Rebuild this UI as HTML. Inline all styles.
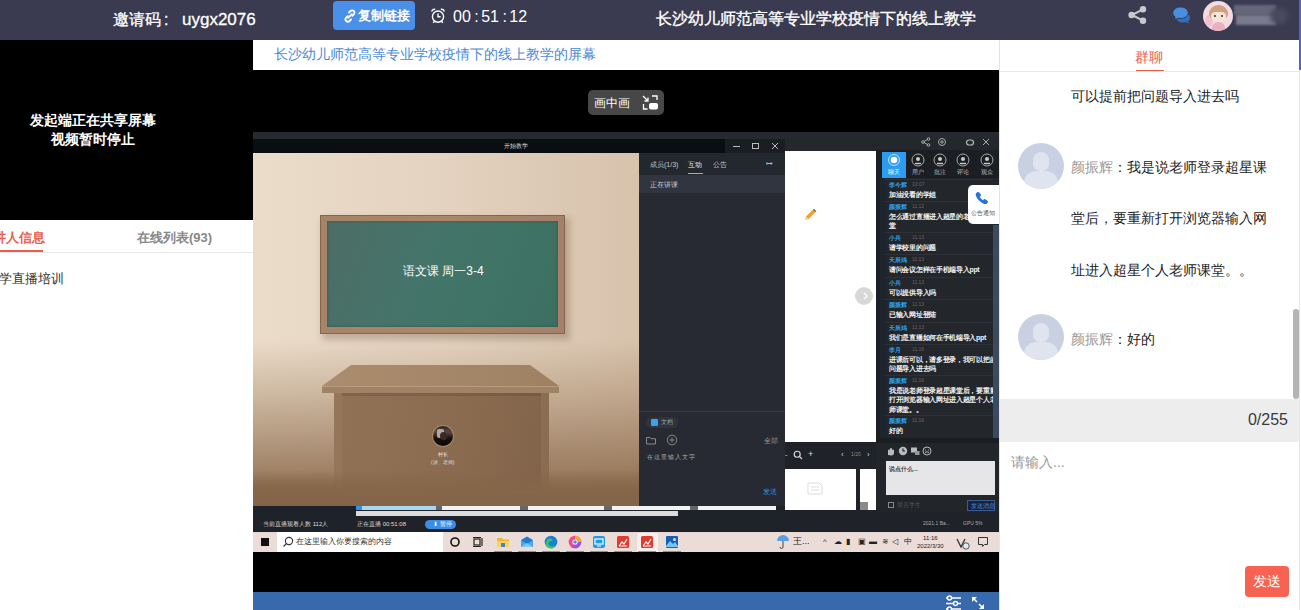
<!DOCTYPE html>
<html><head><meta charset="utf-8">
<style>
*{margin:0;padding:0;box-sizing:border-box}
html,body{width:1301px;height:610px;overflow:hidden;background:#fff;font-family:"Liberation Sans",sans-serif}
.abs{position:absolute}
#top{position:absolute;left:0;top:0;width:1301px;height:40px;background:#3a3b50}
#top .invite{position:absolute;left:113px;top:9px;color:#fff;font-size:16px;-webkit-text-stroke:0.3px #fff;line-height:22px;white-space:nowrap}
#copy{position:absolute;left:333px;top:1px;width:82px;height:29px;background:#4a90e8;border-radius:4px;color:#fff;font-size:13px;line-height:29px}
#timer{position:absolute;left:453px;top:7px;color:#fff;font-size:16px;line-height:20px;white-space:nowrap}
#title{position:absolute;left:656px;top:8px;color:#fff;font-size:16px;-webkit-text-stroke:0.35px #fff;line-height:22px;white-space:nowrap}
#left{position:absolute;left:0;top:40px;width:253px;height:570px;background:#fff}
#lvid{position:absolute;left:0;top:0;width:253px;height:180px;background:#000;color:#fff;font-size:13px;text-align:center}
#center{position:absolute;left:253px;top:40px;width:746px;height:570px;background:#000}
#right{position:absolute;left:999px;top:40px;width:302px;height:570px;background:#fff;border-left:1px solid #e4e4e4}
.msg{left:71px;font-size:14px;color:#222;line-height:20px;white-space:nowrap}
.av{position:absolute;left:18px;width:46px;height:46px;border-radius:50%;background:#c9d0e2;overflow:hidden}
.av:before{content:"";position:absolute;left:15px;top:9px;width:16px;height:19px;border-radius:8px 8px 7px 7px;background:#dfe4ef}
.av:after{content:"";position:absolute;left:6px;top:28px;width:34px;height:22px;border-radius:12px 12px 0 0;background:#dfe4ef}
.t{white-space:nowrap}
</style></head><body>
<div id="top">
  <div class="invite">邀请码<span style="position:absolute;left:51px;top:0">:</span><span style="position:absolute;left:69px;top:0;font-size:17px">uygx2076</span></div>
  <div id="copy"><svg class="abs" style="left:10px;top:8px" width="14" height="14" viewBox="0 0 14 14"><g fill="none" stroke="#fff" stroke-width="1.8" stroke-linecap="round"><path d="M6 3.5l1.5-1.5a2.3 2.3 0 0 1 3.3 3.3L9.3 6.8"/><path d="M8 10.5L6.5 12a2.3 2.3 0 0 1-3.3-3.3L4.7 7.2"/><path d="M5.2 8.8l3.6-3.6"/></g></svg><span class="abs" style="left:25px;top:0;font-weight:bold">复制链接</span></div>
  <svg class="abs" style="left:430px;top:8px" width="16" height="16" viewBox="0 0 16 16"><g fill="none" stroke="#fff" stroke-width="1.4"><circle cx="8" cy="8.6" r="5.6"/><path d="M8 5.5v3.3h2.6"/><path d="M1.8 3.6a2.6 2.6 0 0 1 3.4-2.2M14.2 3.6a2.6 2.6 0 0 0-3.4-2.2"/><path d="M4.5 13.2l-1.3 1.6M11.5 13.2l1.3 1.6"/></g></svg>
  <div id="timer">00<span style="letter-spacing:-1px"> : </span>51<span style="letter-spacing:-1px"> : </span>12</div>
  <div id="title">长沙幼儿师范高等专业学校疫情下的线上教学</div>
  <svg class="abs" style="left:1128px;top:6px" width="19" height="18" viewBox="0 0 19 18"><g fill="#c8c8d0"><circle cx="15" cy="3.3" r="3.2"/><circle cx="3.6" cy="9" r="3.2"/><circle cx="15" cy="14.7" r="3.2"/></g><path d="M4 9L15 3.3M4 9l11 5.7" stroke="#c8c8d0" stroke-width="2"/></svg>
  <svg class="abs" style="left:1172px;top:6px" width="20" height="18" viewBox="0 0 20 18"><path d="M11 6.5c3.8 0 7 2.3 7 5.2 0 1.4-.7 2.6-1.9 3.5l.6 2.4-3-1.5c-.9.3-1.8.4-2.7.4-3.8 0-6.8-2.2-6.8-4.8S7.2 6.5 11 6.5z" fill="#2f6fc0"/><path d="M8.5 1C4 1 .8 3.7.8 6.9c0 1.7.9 3.2 2.3 4.2L2.6 14l3.4-1.8c.8.2 1.6.3 2.5.3 4.5 0 7.7-2.6 7.7-5.8S13 1 8.5 1z" fill="#4a8ee0" stroke="#3a3b50" stroke-width="1"/></svg>
  <div class="abs" style="left:1203px;top:1px;width:30px;height:30px;border-radius:50%;background:#f4dbe2;overflow:hidden">
    <div class="abs" style="left:2px;top:14px;width:8px;height:12px;border-radius:50%;background:#f0b8c8;opacity:.7"></div>
    <div class="abs" style="left:6px;top:4px;width:19px;height:14px;border-radius:9px 9px 5px 5px;background:#d2a080"></div>
    <div class="abs" style="left:8px;top:11px;width:15px;height:10px;border-radius:5px 5px 7px 7px;background:#f6e4d6"></div>
    <div class="abs" style="left:11px;top:14px;width:2px;height:2px;background:#333;border-radius:50%"></div>
    <div class="abs" style="left:18px;top:14px;width:2px;height:2px;background:#333;border-radius:50%"></div>
    <div class="abs" style="left:9px;top:21px;width:13px;height:10px;border-radius:6px 6px 0 0;background:#eab0c2"></div>
  </div>
  <div class="abs" style="left:1234px;top:5px;width:42px;height:10px;background:#66667a;filter:blur(1.2px)"></div>
  <div class="abs" style="left:1236px;top:15px;width:40px;height:10px;background:#7a7a8e;filter:blur(1.2px)"></div>
  <div class="abs" style="left:1270px;top:8px;width:18px;height:16px;border-radius:8px;background:#4a4a5e;filter:blur(2px)"></div>
  
</div>
<div id="left">
  <div id="lvid"><div style="position:absolute;left:0;width:186px;top:71px;line-height:19px;font-size:14px;font-weight:bold">发起端正在共享屏幕<br>视频暂时停止</div></div>
  <div class="abs" style="left:-20px;top:189px;font-size:13px;color:#e8604c;font-weight:bold;white-space:nowrap">主讲人信息</div>
  <div class="abs" style="left:0;top:210px;width:43px;height:2px;background:#e8604c"></div>
  <div class="abs" style="left:137px;top:189px;font-size:13px;color:#888;font-weight:bold;white-space:nowrap">在线列表(93)</div>
  <div class="abs" style="left:0;top:212px;width:253px;height:1px;background:#e6e6e6"></div>
  <div class="abs" style="left:-14px;top:230px;font-size:13px;color:#333;white-space:nowrap">教学直播培训</div>
</div>
<div id="center">
  <div class="abs" style="left:0;top:0;width:746px;height:30px;background:#fff"></div>
  <div class="abs" style="left:21px;top:6px;font-size:14px;color:#4a8ad8;white-space:nowrap">长沙幼儿师范高等专业学校疫情下的线上教学的屏幕</div>
  <div class="abs" style="left:0;top:552px;width:746px;height:18px;background:#3869ad"></div>
<div id="ss" class="abs" style="left:0;top:92px;width:746px;height:420px;overflow:hidden"><div class="abs" style="left:0px;top:0px;width:746px;height:7px;background:#262a30;"></div>
<div class="abs" style="left:0px;top:7px;width:472px;height:14px;background:#0a0d11;"></div>
<div class="abs" style="left:472px;top:7px;width:60px;height:14px;background:#1a1e24;"></div>
<div class="abs" style="left:532px;top:7px;width:214px;height:12px;background:#24282e;"></div>
<div class="abs t" style="left:251px;top:10px;font-size:6px;line-height:8px;color:#ddd;">开始教学</div>
<div class="abs" style="left:480px;top:14px;width:7px;height:1px;background:#bbb;"></div>
<div class="abs" style="left:499px;top:11px;width:7px;height:6px;border:1px solid #bbb"></div>
<svg class="abs" style="left:518px;top:10px;" width="8" height="8" viewBox="0 0 8 8"><path d="M1 1l6 6M7 1L1 7" stroke="#bbb" stroke-width="1"/></svg>
<svg class="abs" style="left:668px;top:5px;" width="10" height="10" viewBox="0 0 10 10"><g fill="none" stroke="#aaa" stroke-width="1"><circle cx="7.5" cy="2" r="1.3"/><circle cx="2" cy="5" r="1.3"/><circle cx="7.5" cy="8" r="1.3"/><path d="M3 4.5l3.5-2M3 5.5l3.5 2"/></g></svg>
<svg class="abs" style="left:684px;top:5px;" width="10" height="10" viewBox="0 0 10 10"><g fill="none" stroke="#aaa" stroke-width="1"><circle cx="5" cy="5" r="3.5"/><circle cx="5" cy="5" r="1.2"/></g></svg>
<svg class="abs" style="left:712px;top:5px;" width="10" height="10" viewBox="0 0 10 10"><g fill="none" stroke="#bbb" stroke-width="1.2"><rect x="1.5" y="3" width="7" height="5" rx="2.5"/></g></svg>
<svg class="abs" style="left:728px;top:5px;" width="10" height="10" viewBox="0 0 10 10"><path d="M2 2l6 6M8 2L2 8" stroke="#aaa" stroke-width="1"/></svg>
<div class="abs" style="left:0px;top:21px;width:386px;height:353px;background:linear-gradient(90deg,#ebdcca 0%,#e3d2bf 50%,#d7c2ac 100%);"></div>
<div class="abs" style="left:0px;top:208px;width:386px;height:166px;background:linear-gradient(180deg,rgba(140,105,70,0) 0%,rgba(140,105,70,.28) 30%,rgba(136,102,70,.62) 65%,rgba(134,100,70,.95) 100%);"></div>
<div class="abs" style="left:69px;top:86px;width:248px;height:122px;background:rgba(80,50,30,.25);filter:blur(3px)"></div>
<div class="abs" style="left:67px;top:83px;width:245px;height:119px;background:linear-gradient(90deg,#a68468,#ac8667 50%,#a5806a);box-shadow:inset 0 0 0 1px #85654c"></div>
<div class="abs" style="left:74px;top:89px;width:231px;height:106px;background:linear-gradient(110deg,#4d6d65 0%,#45746a 40%,#3f7466 70%,#3c6f62 100%);box-shadow:inset 0 0 3px rgba(40,30,20,.35)"></div>
<div class="abs t" style="left:150px;top:132px;font-size:12px;line-height:14px;color:#fff;line-height:14px">语文课 周一3-4</div>
<svg class="abs" style="left:69px;top:233px;" width="238" height="29" viewBox="0 0 238 29"><defs><linearGradient id="dt" x1="0" y1="0" x2="1" y2="0"><stop offset="0" stop-color="#ab8d6e"/><stop offset="1" stop-color="#9e8063"/></linearGradient></defs><path d="M29 0H208L237 21V28H0V21Z" fill="url(#dt)"/><rect x="0" y="21" width="237" height="7" fill="#a08264"/><rect x="0" y="21" width="237" height="1" fill="#b89c80"/></svg>
<div class="abs" style="left:81px;top:261px;width:215px;height:97px;background:linear-gradient(100deg,#917256 0%,#8a6b4f 60%,#80634a 100%);"></div>
<div class="abs" style="left:81px;top:261px;width:8px;height:97px;background:rgba(160,130,100,.3);"></div>
<div class="abs" style="left:288px;top:261px;width:8px;height:97px;background:rgba(160,130,100,.3);"></div>
<div class="abs" style="left:0px;top:338px;width:386px;height:36px;background:linear-gradient(180deg,rgba(134,101,72,0) 0%,rgba(134,101,72,.9) 50%,#84654a 100%);"></div>
<div class="abs" style="left:89px;top:261px;width:199px;height:3px;background:rgba(60,40,25,.18);"></div>
<div class="abs" style="left:180px;top:294px;width:20px;height:20px;background:linear-gradient(180deg,#2a2420 0%,#5a4a40 30%,#1a1210 60%,#070707 100%);border-radius:50%;box-shadow:0 0 0 1px rgba(200,170,120,.5)"></div>
<div class="abs" style="left:184px;top:297px;width:7px;height:9px;background:#c8c4c0;border-radius:2px;opacity:.8"></div>
<div class="abs" style="left:187px;top:300px;width:7px;height:8px;background:#3a2a26;border-radius:50%"></div>
<div class="abs t" style="left:185px;top:319px;font-size:5px;line-height:7px;color:#eee;">村长</div>
<div class="abs t" style="left:178px;top:327px;font-size:5px;line-height:7px;color:#ddd;">(讲、老师)</div>
<div class="abs" style="left:386px;top:21px;width:146px;height:22px;background:#23272e;"></div>
<div class="abs t" style="left:397px;top:28px;font-size:7px;line-height:9px;color:#c8c8c8;">成员(1/3)</div>
<div class="abs t" style="left:435px;top:28px;font-size:7px;line-height:9px;color:#eee;">互动</div>
<div class="abs" style="left:435px;top:41px;width:15px;height:1px;background:#aaa;"></div>
<div class="abs t" style="left:460px;top:28px;font-size:7px;line-height:9px;color:#c8c8c8;">公告</div>
<div class="abs t" style="left:513px;top:27px;font-size:8px;line-height:10px;color:#bbb;">↦</div>
<div class="abs" style="left:386px;top:43px;width:146px;height:18px;background:#31353f;"></div>
<div class="abs t" style="left:397px;top:48px;font-size:7px;line-height:9px;color:#ccc;">正在讲课</div>
<div class="abs" style="left:386px;top:61px;width:146px;height:313px;background:#272a33;"></div>
<div class="abs" style="left:386px;top:279px;width:146px;height:1px;background:#343842;"></div>
<div class="abs" style="left:393px;top:285px;width:32px;height:11px;background:#30343d;border-radius:6px"></div>
<div class="abs" style="left:398px;top:287px;width:7px;height:7px;background:#3aa0f0;border-radius:1px"></div>
<div class="abs t" style="left:408px;top:286px;font-size:6px;line-height:8px;color:#9aa;">文档</div>
<svg class="abs" style="left:392px;top:302px;" width="12" height="12" viewBox="0 0 12 12"><path d="M1.5 3.5h3.5l1 1.2h4.5v5.3h-9z" fill="none" stroke="#888" stroke-width="1"/></svg>
<svg class="abs" style="left:413px;top:302px;" width="12" height="12" viewBox="0 0 12 12"><g fill="none" stroke="#888" stroke-width="1"><circle cx="6" cy="6" r="4.8"/><path d="M6 3.5v5M3.5 6h5"/></g></svg>
<div class="abs t" style="left:511px;top:304px;font-size:7px;line-height:9px;color:#999;">全部</div>
<div class="abs t" style="left:394px;top:321px;font-size:6px;line-height:8px;color:#aaa;letter-spacing:1px">在这里输入文字</div>
<div class="abs t" style="left:510px;top:355px;font-size:7px;line-height:9px;color:#3a8ee6;">发送</div>
<div class="abs" style="left:532px;top:19px;width:91px;height:291px;background:#fff;"></div>
<svg class="abs" style="left:550px;top:76px;" width="14" height="14" viewBox="0 0 14 14"><path d="M2 12l1-3.5 7-7 2.5 2.5-7 7z" fill="#f0a030"/><path d="M10 1.5l2.5 2.5 .8-.8-2.5-2.5z" fill="#555"/><path d="M2 12l1-3.5 2.5 2.5z" fill="#f6d8a0"/></svg>
<div class="abs" style="left:602px;top:155px;width:18px;height:18px;background:#d8d8d8;border-radius:50%"></div>
<svg class="abs" style="left:608px;top:160px;" width="8" height="8" viewBox="0 0 8 8"><path d="M3 1l3 3-3 3" fill="none" stroke="#fff" stroke-width="1.2"/></svg>
<div class="abs" style="left:532px;top:310px;width:91px;height:27px;background:#1f2329;"></div>
<div class="abs t" style="left:532px;top:318px;font-size:8px;line-height:10px;color:#ccc;">-</div>
<svg class="abs" style="left:540px;top:318px;" width="10" height="10" viewBox="0 0 10 10"><g fill="none" stroke="#ddd" stroke-width="1.1"><circle cx="4.2" cy="4.2" r="3"/><path d="M6.5 6.5l2.5 2.5"/></g></svg>
<div class="abs t" style="left:555px;top:317px;font-size:9px;line-height:11px;color:#ddd;">+</div>
<div class="abs t" style="left:588px;top:318px;font-size:8px;line-height:10px;color:#ccc;">‹</div>
<div class="abs t" style="left:598px;top:319px;font-size:5px;line-height:7px;color:#888;">1/20</div>
<div class="abs t" style="left:614px;top:318px;font-size:8px;line-height:10px;color:#ccc;">›</div>
<div class="abs" style="left:532px;top:337px;width:91px;height:43px;background:#1f2329;"></div>
<div class="abs" style="left:532px;top:337px;width:71px;height:41px;background:#fff;"></div>
<div class="abs" style="left:607px;top:337px;width:16px;height:41px;background:#fff;"></div>
<svg class="abs" style="left:553px;top:349px;" width="18" height="14" viewBox="0 0 18 14"><g fill="none" stroke="#ddd" stroke-width="1"><path d="M2 2h11l3 3v8H2z"/><path d="M5 6h8M5 9h8"/></g></svg>
<div class="abs" style="left:607px;top:370px;width:8px;height:8px;background:#8a8a8a;"></div>
<div class="abs" style="left:623px;top:18px;width:123px;height:28px;background:#1b1e23;"></div>
<div class="abs" style="left:629px;top:20px;width:24px;height:26px;background:#2d9cf0;"></div>
<svg class="abs" style="left:634px;top:21px;" width="14" height="14" viewBox="0 0 14 14"><circle cx="7" cy="7" r="5.5" fill="none" stroke="#bfe2ff" stroke-width="1"/><circle cx="7" cy="7" r="3.3" fill="#fff"/></svg>
<div class="abs t" style="left:635px;top:36px;font-size:6px;line-height:8px;color:#fff;">聊天</div>
<svg class="abs" style="left:658px;top:21px;" width="14" height="14" viewBox="0 0 14 14"><circle cx="7" cy="7" r="6" fill="none" stroke="#aaa" stroke-width="1"/><circle cx="7" cy="6" r="2" fill="#ccc"/><path d="M4 10.5h6" stroke="#ccc" stroke-width="1.4"/></svg>
<div class="abs t" style="left:659px;top:36px;font-size:6px;line-height:8px;color:#bbb;">用户</div>
<svg class="abs" style="left:680px;top:21px;" width="14" height="14" viewBox="0 0 14 14"><circle cx="7" cy="7" r="6" fill="none" stroke="#aaa" stroke-width="1"/><circle cx="7" cy="6" r="2" fill="#ccc"/><path d="M4 10.5h6" stroke="#ccc" stroke-width="1.4"/></svg>
<div class="abs t" style="left:681px;top:36px;font-size:6px;line-height:8px;color:#bbb;">批注</div>
<svg class="abs" style="left:703px;top:21px;" width="14" height="14" viewBox="0 0 14 14"><circle cx="7" cy="7" r="6" fill="none" stroke="#aaa" stroke-width="1"/><circle cx="7" cy="6" r="2" fill="#ccc"/><path d="M4 10.5h6" stroke="#ccc" stroke-width="1.4"/></svg>
<div class="abs t" style="left:704px;top:36px;font-size:6px;line-height:8px;color:#bbb;">评论</div>
<svg class="abs" style="left:727px;top:21px;" width="14" height="14" viewBox="0 0 14 14"><circle cx="7" cy="7" r="6" fill="none" stroke="#aaa" stroke-width="1"/><circle cx="7" cy="6" r="2" fill="#ccc"/><path d="M4 10.5h6" stroke="#ccc" stroke-width="1.4"/></svg>
<div class="abs t" style="left:728px;top:36px;font-size:6px;line-height:8px;color:#bbb;">观众</div>
<div class="abs" style="left:623px;top:46px;width:123px;height:260px;background:#23272c;"></div>
<div class="abs" style="left:623px;top:46px;width:4px;height:260px;background:#1b1e22;"></div>
<div class="abs" style="left:627px;top:46px;width:7px;height:260px;background:#1f252d;"></div>
<div class="abs" style="left:632px;top:47px;width:108px;height:1px;background:#2e3238;"></div>
<div class="abs t" style="left:636px;top:49px;font-size:6px;line-height:8px;color:#2e9ff0;font-weight:bold">李今辉</div>
<div class="abs t" style="left:659px;top:49px;font-size:5px;line-height:7px;color:#666;">10:07</div>
<div class="abs t" style="left:636px;top:58.0px;font-size:7px;line-height:9px;color:#f2f2f2;letter-spacing:-0.3px;font-weight:bold">加油没看的学姐</div>
<div class="abs" style="left:632px;top:69px;width:108px;height:1px;background:#2e3238;"></div>
<div class="abs t" style="left:636px;top:71px;font-size:6px;line-height:8px;color:#2e9ff0;font-weight:bold">颜振辉</div>
<div class="abs t" style="left:659px;top:71px;font-size:5px;line-height:7px;color:#666;">11:12</div>
<div class="abs t" style="left:636px;top:80.0px;font-size:7px;line-height:9px;color:#f2f2f2;letter-spacing:-0.3px;font-weight:bold">怎么通过直播进入超星的老师课</div>
<div class="abs t" style="left:636px;top:89.30000000000001px;font-size:7px;line-height:9px;color:#f2f2f2;letter-spacing:-0.3px;font-weight:bold">堂</div>
<div class="abs" style="left:632px;top:100px;width:108px;height:1px;background:#2e3238;"></div>
<div class="abs t" style="left:636px;top:102px;font-size:6px;line-height:8px;color:#2e9ff0;font-weight:bold">小兵</div>
<div class="abs t" style="left:659px;top:102px;font-size:5px;line-height:7px;color:#666;">11:13</div>
<div class="abs t" style="left:636px;top:111.0px;font-size:7px;line-height:9px;color:#f2f2f2;letter-spacing:-0.3px;font-weight:bold">请学校里的问题</div>
<div class="abs" style="left:632px;top:122px;width:108px;height:1px;background:#2e3238;"></div>
<div class="abs t" style="left:636px;top:124px;font-size:6px;line-height:8px;color:#2e9ff0;font-weight:bold">天辰鸡</div>
<div class="abs t" style="left:659px;top:124px;font-size:5px;line-height:7px;color:#666;">11:13</div>
<div class="abs t" style="left:636px;top:133.0px;font-size:7px;line-height:9px;color:#f2f2f2;letter-spacing:-0.3px;font-weight:bold">请问会议怎样在手机端导入ppt</div>
<div class="abs" style="left:632px;top:145px;width:108px;height:1px;background:#2e3238;"></div>
<div class="abs t" style="left:636px;top:147px;font-size:6px;line-height:8px;color:#2e9ff0;font-weight:bold">小兵</div>
<div class="abs t" style="left:659px;top:147px;font-size:5px;line-height:7px;color:#666;">11:13</div>
<div class="abs t" style="left:636px;top:156.0px;font-size:7px;line-height:9px;color:#f2f2f2;letter-spacing:-0.3px;font-weight:bold">可以提供导入吗</div>
<div class="abs" style="left:632px;top:167px;width:108px;height:1px;background:#2e3238;"></div>
<div class="abs t" style="left:636px;top:169px;font-size:6px;line-height:8px;color:#2e9ff0;font-weight:bold">颜振辉</div>
<div class="abs t" style="left:659px;top:169px;font-size:5px;line-height:7px;color:#666;">11:13</div>
<div class="abs t" style="left:636px;top:178.0px;font-size:7px;line-height:9px;color:#f2f2f2;letter-spacing:-0.3px;font-weight:bold">已输入网址登陆</div>
<div class="abs" style="left:632px;top:190px;width:108px;height:1px;background:#2e3238;"></div>
<div class="abs t" style="left:636px;top:192px;font-size:6px;line-height:8px;color:#2e9ff0;font-weight:bold">天辰鸡</div>
<div class="abs t" style="left:659px;top:192px;font-size:5px;line-height:7px;color:#666;">11:13</div>
<div class="abs t" style="left:636px;top:201.0px;font-size:7px;line-height:9px;color:#f2f2f2;letter-spacing:-0.3px;font-weight:bold">我们是直播如何在手机端导入ppt</div>
<div class="abs" style="left:632px;top:212px;width:108px;height:1px;background:#2e3238;"></div>
<div class="abs t" style="left:636px;top:214px;font-size:6px;line-height:8px;color:#2e9ff0;font-weight:bold">李月</div>
<div class="abs t" style="left:659px;top:214px;font-size:5px;line-height:7px;color:#666;">11:16</div>
<div class="abs t" style="left:636px;top:223.0px;font-size:7px;line-height:9px;color:#f2f2f2;letter-spacing:-0.3px;font-weight:bold">进课后可以，请多登录，我可以把的问</div>
<div class="abs t" style="left:636px;top:232.3px;font-size:7px;line-height:9px;color:#f2f2f2;letter-spacing:-0.3px;font-weight:bold">问题导入进去吗</div>
<div class="abs" style="left:632px;top:243px;width:108px;height:1px;background:#2e3238;"></div>
<div class="abs t" style="left:636px;top:245px;font-size:6px;line-height:8px;color:#2e9ff0;font-weight:bold">颜振辉</div>
<div class="abs t" style="left:659px;top:245px;font-size:5px;line-height:7px;color:#666;">11:16</div>
<div class="abs t" style="left:636px;top:254.0px;font-size:7px;line-height:9px;color:#f2f2f2;letter-spacing:-0.3px;font-weight:bold">我是说老师登录超星课堂后，要重新</div>
<div class="abs t" style="left:636px;top:263.3px;font-size:7px;line-height:9px;color:#f2f2f2;letter-spacing:-0.3px;font-weight:bold">打开浏览器输入网址进入超星个人老</div>
<div class="abs t" style="left:636px;top:272.6px;font-size:7px;line-height:9px;color:#f2f2f2;letter-spacing:-0.3px;font-weight:bold">师课堂。。</div>
<div class="abs" style="left:632px;top:283px;width:108px;height:1px;background:#2e3238;"></div>
<div class="abs t" style="left:636px;top:285px;font-size:6px;line-height:8px;color:#2e9ff0;font-weight:bold">颜振辉</div>
<div class="abs t" style="left:659px;top:285px;font-size:5px;line-height:7px;color:#666;">11:16</div>
<div class="abs t" style="left:636px;top:294.0px;font-size:7px;line-height:9px;color:#f2f2f2;letter-spacing:-0.3px;font-weight:bold">好的</div>
<div class="abs" style="left:740px;top:93px;width:6px;height:213px;background:#3b4a60;"></div>
<div class="abs" style="left:715px;top:53px;width:31px;height:39px;background:#fff;border-radius:5px 0 0 5px"></div>
<svg class="abs" style="left:722px;top:59px;" width="13" height="13" viewBox="0 0 13 13"><path d="M2.5 1.2c.6-.4 1.4-.3 1.8.3l1.4 2.1c.4.6.2 1.3-.3 1.7l-.7.5c.7 1.5 1.9 2.8 3.4 3.5l.5-.7c.4-.5 1.1-.7 1.7-.3l2.1 1.4c.6.4.7 1.2.3 1.8l-.7.9c-.6.7-1.6 1-2.5.7C5.7 11.8 2 8.1.8 4.3c-.3-.9 0-1.9.7-2.5z" fill="#1d74e0"/></svg>
<div class="abs t" style="left:718px;top:77px;font-size:6px;line-height:8px;color:#555;">公告通知</div>
<div class="abs" style="left:623px;top:306px;width:123px;height:74px;background:#22262b;"></div>
<div class="abs" style="left:623px;top:306px;width:123px;height:5px;background:#1a1d21;"></div>
<svg class="abs" style="left:632px;top:314px;" width="10" height="10" viewBox="0 0 10 10"><path d="M3 9V4.5a1 1 0 0 1 2 0V3a1 1 0 0 1 2 0v1.5a1 1 0 0 1 2 0V7c0 1.5-1 2.5-2.5 2.5z" fill="#bbb"/></svg>
<svg class="abs" style="left:645px;top:314px;" width="10" height="10" viewBox="0 0 10 10"><circle cx="5" cy="5" r="4.2" fill="#bbb"/><path d="M5 2.5V5h2" stroke="#22262b" stroke-width="1.2" fill="none"/></svg>
<svg class="abs" style="left:657px;top:314px;" width="10" height="10" viewBox="0 0 10 10"><rect x="1" y="1.5" width="6" height="5" fill="#bbb"/><rect x="5" y="5" width="4.5" height="4" fill="#999"/></svg>
<svg class="abs" style="left:669px;top:314px;" width="10" height="10" viewBox="0 0 10 10"><circle cx="5" cy="5" r="4" fill="none" stroke="#bbb" stroke-width="1"/><path d="M3 6.5q2-1.5 4 0" stroke="#bbb" fill="none" stroke-width="1"/><circle cx="3.5" cy="4" r=".6" fill="#bbb"/><circle cx="6.5" cy="4" r=".6" fill="#bbb"/></svg>
<div class="abs" style="left:633px;top:329px;width:109px;height:34px;background:#e6e6e8;"></div>
<div class="abs t" style="left:636px;top:333px;font-size:6px;line-height:8px;color:#444;font-weight:bold">说点什么...</div>
<div class="abs" style="left:635px;top:370px;width:6px;height:6px;border:1px solid #888"></div>
<div class="abs t" style="left:644px;top:369px;font-size:6px;line-height:8px;color:#555;">禁言学生</div>
<div class="abs" style="left:714px;top:368px;width:28px;height:11px;background:#16233a;border:1px solid #3a5c90"></div>
<div class="abs t" style="left:718px;top:370px;font-size:6px;line-height:8px;color:#4a9af0;">发送消息</div>
<div class="abs" style="left:0px;top:374px;width:532px;height:10px;background:#1e2329;"></div>
<div class="abs" style="left:532px;top:378px;width:91px;height:6px;background:#1f2329;"></div>
<div class="abs" style="left:103px;top:374px;width:80px;height:4px;background:#a6d8f2;"></div>
<div class="abs" style="left:103px;top:374px;width:6px;height:4px;background:#3a8ee6;"></div>
<div class="abs" style="left:183px;top:374px;width:6px;height:4px;background:#666;"></div>
<div class="abs" style="left:267px;top:374px;width:8px;height:4px;background:#666;"></div>
<div class="abs" style="left:351px;top:374px;width:8px;height:4px;background:#666;"></div>
<div class="abs" style="left:437px;top:374px;width:8px;height:4px;background:#666;"></div>
<div class="abs" style="left:189px;top:374px;width:78px;height:4px;background:#f2f2f2;"></div>
<div class="abs" style="left:275px;top:374px;width:76px;height:4px;background:#f2f2f2;"></div>
<div class="abs" style="left:359px;top:374px;width:78px;height:4px;background:#f2f2f2;"></div>
<div class="abs" style="left:445px;top:374px;width:78px;height:4px;background:#f2f2f2;"></div>
<div class="abs" style="left:103px;top:379px;width:322px;height:5px;background:#dcdcdc;"></div>
<div class="abs" style="left:623px;top:380px;width:123px;height:4px;background:#1f2329;"></div>
<div class="abs" style="left:0px;top:384px;width:746px;height:16px;background:#1f2329;"></div>
<div class="abs t" style="left:10px;top:388px;font-size:6px;line-height:8px;color:#ddd;">当前直播观看人数 112人</div>
<div class="abs t" style="left:104px;top:388px;font-size:6px;line-height:8px;color:#ddd;">正在直播 00:51:08</div>
<div class="abs" style="left:172px;top:388px;width:31px;height:9px;background:#3a8ee6;border-radius:5px"></div>
<div class="abs t" style="left:180px;top:388px;font-size:6px;line-height:8px;color:#fff;">⬇ 暂停</div>
<div class="abs t" style="left:670px;top:388px;font-size:5px;line-height:7px;color:#aaa;">2021.1 Ba...</div>
<div class="abs t" style="left:710px;top:388px;font-size:5px;line-height:7px;color:#aaa;">GPU 5%</div>
<div class="abs" style="left:0px;top:400px;width:746px;height:20px;background:#ecdcd8;"></div>
<div class="abs" style="left:0px;top:400px;width:746px;height:1px;background:#e4d6d2;"></div>
<div class="abs" style="left:8px;top:406px;width:8px;height:8px;background:#111;"></div>
<div class="abs" style="left:24px;top:400px;width:166px;height:20px;background:#fff;"></div>
<svg class="abs" style="left:29px;top:404px;" width="12" height="12" viewBox="0 0 12 12"><g fill="none" stroke="#333" stroke-width="1.1"><circle cx="7" cy="5" r="3.6"/><path d="M4.5 7.5L1.5 10.5"/></g></svg>
<div class="abs t" style="left:43px;top:405px;font-size:8px;line-height:10px;color:#333;line-height:10px">在这里输入你要搜索的内容</div>
<svg class="abs" style="left:196px;top:404px;" width="12" height="12" viewBox="0 0 12 12"><circle cx="6" cy="6" r="4" fill="none" stroke="#111" stroke-width="1.6"/></svg>
<svg class="abs" style="left:219px;top:404px;" width="12" height="12" viewBox="0 0 12 12"><g fill="none" stroke="#222" stroke-width="1.2"><rect x="2" y="3" width="6" height="6"/><path d="M10 2v8M1 1.5h8M1 10.5h8"/></g></svg>
<div class="abs" style="left:384px;top:401px;width:21px;height:19px;background:#f6efec;"></div>

<svg class="abs" style="left:243px;top:403px;" width="14" height="14" viewBox="0 0 14 14"><path d="M1 3h5l1.5 1.5H13V12H1z" fill="#f2b431"/><path d="M1 6h12v6H1z" fill="#f8d264"/><rect x="5" y="8" width="4" height="4" fill="#3a8ad0"/></svg>
<svg class="abs" style="left:267px;top:403px;" width="14" height="14" viewBox="0 0 14 14"><path d="M1 5l6-3.5L13 5v7H1z" fill="#1e7cd0"/><path d="M1 5l6 4 6-4v7H1z" fill="#4aa8ea"/><path d="M1 12l6-4 6 4z" fill="#86c8f4"/></svg>
<svg class="abs" style="left:291px;top:403px;" width="14" height="14" viewBox="0 0 14 14"><circle cx="7" cy="7" r="6.3" fill="#1a7fd8"/><path d="M2 9a5 5 0 0 0 9.5 1.5C9 12 5 11.5 4.5 8.5 4.5 6.5 7 5.5 9 6.5 8.5 4 6 3 4 4 2.5 5 2 7 2 9z" fill="#3ac070"/><circle cx="7.6" cy="7.8" r="1.8" fill="#1a7fd8"/></svg>
<svg class="abs" style="left:315px;top:403px;" width="14" height="14" viewBox="0 0 14 14"><circle cx="7" cy="7" r="6.3" fill="#f04a8a"/><path d="M7 .7A6.3 6.3 0 0 1 13.3 7H7z" fill="#f7a623"/><path d="M7 7h6.3A6.3 6.3 0 0 1 4 12.5z" fill="#a050e0"/><circle cx="7" cy="7" r="2.6" fill="#fff"/><circle cx="7" cy="7" r="1.8" fill="#4a90e2"/></svg>
<svg class="abs" style="left:339px;top:403px;" width="14" height="14" viewBox="0 0 14 14"><rect x="1" y="1" width="12" height="12" rx="2" fill="#1d9be6"/><rect x="3" y="4" width="8" height="5" fill="none" stroke="#fff" stroke-width="1.2"/><path d="M5 11h4" stroke="#fff" stroke-width="1"/></svg>
<svg class="abs" style="left:363px;top:403px;" width="14" height="14" viewBox="0 0 14 14"><rect x="1" y="1" width="12" height="12" rx="1.5" fill="#e23a2e"/><path d="M3 11l3-4 2 2 3-5" fill="none" stroke="#fff" stroke-width="1.2"/><path d="M3 11h8" stroke="#fff" stroke-width="1"/></svg>
<svg class="abs" style="left:387px;top:403px;" width="14" height="14" viewBox="0 0 14 14"><rect x="1" y="1" width="12" height="12" rx="1.5" fill="#e23a2e"/><path d="M3 11l3-4 2 2 3-5" fill="none" stroke="#fff" stroke-width="1.2"/><path d="M3 11h8" stroke="#fff" stroke-width="1"/></svg>
<svg class="abs" style="left:412px;top:403px;" width="14" height="14" viewBox="0 0 14 14"><rect x="1" y="1" width="12" height="12" rx="1" fill="#1560b0"/><path d="M1 11l4-5 3 3 2-2 3 4v1H1z" fill="#7ac4f4"/><circle cx="9.5" cy="4.5" r="1.5" fill="#bfe4fb"/></svg>
<div class="abs" style="left:241px;top:419px;width:18px;height:1px;background:#5a9ee8;"></div>
<div class="abs" style="left:265px;top:419px;width:18px;height:1px;background:#5a9ee8;"></div>
<div class="abs" style="left:289px;top:419px;width:18px;height:1px;background:#5a9ee8;"></div>
<div class="abs" style="left:313px;top:419px;width:18px;height:1px;background:#5a9ee8;"></div>
<div class="abs" style="left:337px;top:419px;width:18px;height:1px;background:#5a9ee8;"></div>
<div class="abs" style="left:361px;top:419px;width:18px;height:1px;background:#5a9ee8;"></div>
<div class="abs" style="left:385px;top:419px;width:18px;height:1px;background:#5a9ee8;"></div>
<div class="abs" style="left:410px;top:419px;width:18px;height:1px;background:#5a9ee8;"></div>
<svg class="abs" style="left:523px;top:403px;" width="14" height="14" viewBox="0 0 14 14"><path d="M1 6a6 6 0 0 1 12 0z" fill="#5aa0e0"/><path d="M7 6v6a1.5 1.5 0 0 1-3 0" fill="none" stroke="#444" stroke-width="1"/></svg>
<div class="abs t" style="left:540px;top:404px;font-size:9px;line-height:11px;color:#222;line-height:11px">王...</div>
<div class="abs t" style="left:570px;top:405px;font-size:8px;line-height:10px;color:#222;line-height:10px">^</div>
<div class="abs t" style="left:581px;top:405px;font-size:8px;line-height:10px;color:#222;line-height:10px">☁</div>
<div class="abs t" style="left:593px;top:405px;font-size:8px;line-height:10px;color:#222;line-height:10px">▮</div>
<div class="abs t" style="left:605px;top:405px;font-size:8px;line-height:10px;color:#222;line-height:10px">▣</div>
<div class="abs t" style="left:616px;top:405px;font-size:8px;line-height:10px;color:#222;line-height:10px">▬</div>
<div class="abs t" style="left:629px;top:405px;font-size:8px;line-height:10px;color:#222;line-height:10px">≋</div>
<div class="abs t" style="left:639px;top:405px;font-size:8px;line-height:10px;color:#222;line-height:10px">◁</div>
<div class="abs t" style="left:651px;top:405px;font-size:8px;line-height:10px;color:#222;line-height:10px">中</div>
<div class="abs t" style="left:670px;top:402px;font-size:6px;line-height:8px;color:#222;">11:16</div>
<div class="abs t" style="left:664px;top:410px;font-size:6px;line-height:8px;color:#222;">2022/3/30</div>
<svg class="abs" style="left:703px;top:404px;" width="14" height="14" viewBox="0 0 14 14"><path d="M1 3l4 8 4-8" fill="none" stroke="#333" stroke-width="1.3"/><circle cx="10" cy="10" r="3.2" fill="#dfe8f5" stroke="#333" stroke-width=".8"/></svg>
<svg class="abs" style="left:724px;top:404px;" width="12" height="12" viewBox="0 0 12 12"><path d="M1.5 1.5h9v7h-3l-2 2v-2h-4z" fill="none" stroke="#333" stroke-width="1"/></svg></div>
  <div class="abs" style="left:335px;top:50px;width:76px;height:25px;background:#474747;border-radius:5px"></div>
  <div class="abs t" style="left:341px;top:56px;font-size:12px;line-height:14px;color:#fff">画中画</div>
  <svg class="abs" style="left:389px;top:55px" width="17" height="15" viewBox="0 0 17 15"><g fill="none" stroke="#fff" stroke-width="1.3"><path d="M1 1l5 5M6 2.5V6H2.5"/><path d="M10 1h5v4"/><path d="M1.5 9v5h4"/></g><rect x="7" y="8" width="9" height="6.5" rx="2" fill="#fff"/></svg>
  <svg class="abs" style="left:692px;top:555px" width="16" height="15" viewBox="0 0 16 15"><g stroke="#fff" fill="none" stroke-width="1.6"><path d="M1 3h15M1 8.5h15M1 14h15"/></g><g fill="#3869ad" stroke="#fff" stroke-width="1.5"><circle cx="4.5" cy="3" r="2"/><circle cx="10.5" cy="8.5" r="2"/><circle cx="4.5" cy="14" r="2"/></g></svg>
  <svg class="abs" style="left:718px;top:556px" width="14" height="14" viewBox="0 0 14 14"><g fill="#fff"><path d="M1 1h5L1 6z"/><path d="M13 13H8l5-5z"/></g><g stroke="#fff" stroke-width="1.6"><path d="M2 2l4 4M12 12L8 8"/></g></svg>
</div>
<div id="right">
  <div class="abs" style="left:135px;top:7px;font-size:14px;color:#e8604c;line-height:20px;white-space:nowrap">群聊</div>
  <div class="abs" style="left:136px;top:30px;width:28px;height:2px;background:#e8604c"></div>
  <div class="abs" style="left:0;top:31px;width:299px;height:1px;background:#e8e8e8"></div>
  <div class="abs" style="left:71px;top:46px;font-size:14px;color:#222;line-height:20px;white-space:nowrap">可以提前把问题导入进去吗</div>
  <div class="av" style="top:103px"></div>
  <div class="abs msg" style="top:117px"><span style="color:#999">颜振辉</span>：我是说老师登录超星课</div>
  <div class="abs msg" style="top:168px">堂后，要重新打开浏览器输入网</div>
  <div class="abs msg" style="top:220px">址进入超星个人老师课堂。。</div>
  <div class="av" style="top:274px"></div>
  <div class="abs msg" style="top:289px"><span style="color:#999">颜振辉</span>：好的</div>
  <div class="abs" style="left:293px;top:269px;width:6px;height:90px;background:#b4b4b4;border-radius:3px"></div>
  <div class="abs" style="left:0;top:359px;width:299px;height:43px;background:#ededed"></div>
  <div class="abs" style="left:230px;top:370px;width:58px;text-align:right;font-size:16px;color:#3a3a3a;line-height:20px">0/255</div>
  <div class="abs" style="left:11px;top:412px;font-size:14px;color:#999;line-height:20px;white-space:nowrap">请输入...</div>
  <div class="abs" style="left:245px;top:526px;width:44px;height:31px;background:#f76350;border-radius:4px;color:#fff;font-size:14px;line-height:31px;text-align:center">发送</div>
  <div class="abs" style="left:299px;top:0;width:1px;height:570px;background:#e6e6e6"></div>
</div>
<div class="abs" style="left:1299px;top:0;width:2px;height:70px;background:#5563c8"></div>
</body></html>
